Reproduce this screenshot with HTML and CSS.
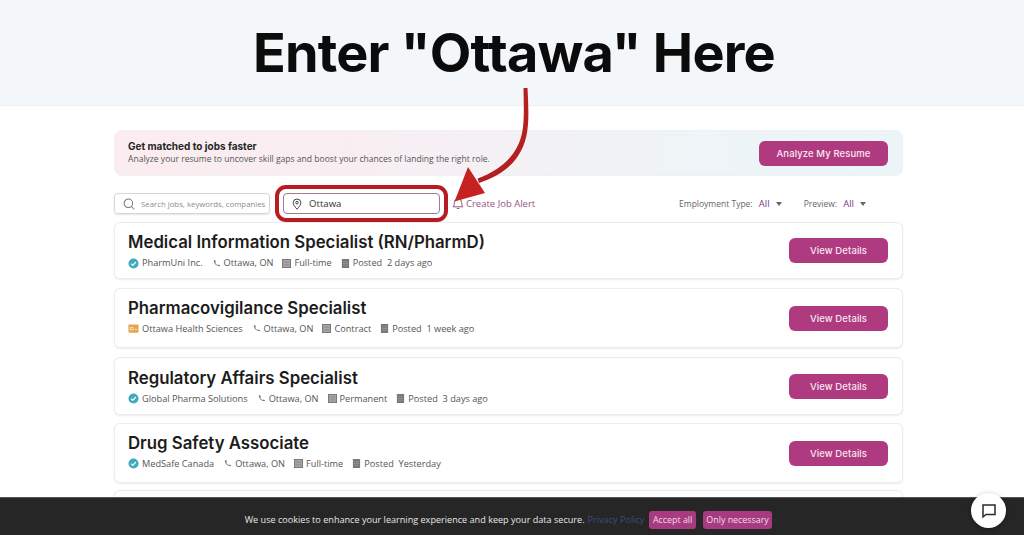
FILE: index.html
```html
<!DOCTYPE html>
<html lang="en">
<head>
    <meta charset="UTF-8">
    <meta name="viewport" content="width=device-width, initial-scale=1.0">
    <title>Enter Ottawa Here</title>
    <link rel="stylesheet" href="styles.css">
</head>
<body>
    <svg width="0" height="0" class="sprites">
        <symbol id="i-check" viewBox="0 0 12 12">
            <circle cx="6" cy="6" r="5.5" fill="#3fa9bd"/>
            <path d="M3.4 6.2l1.8 1.8 3.4-3.6" fill="none" stroke="#fff" stroke-width="1.3"/>
        </symbol>
        <symbol id="i-org" viewBox="0 0 12 10">
            <rect x="0.5" y="0.5" width="11" height="9" rx="1" fill="#e3a650"/>
            <path d="M2.5 4h3v2.5h-3zM7 6h3" fill="none" stroke="#fbe6c4" stroke-width="1"/>
        </symbol>
        <symbol id="i-phone" viewBox="0 0 12 12">
            <path d="M2.6 1.6c-.6 3.6 2.2 7.4 7.8 8.2l.2-1.6-2.3-.9-.9.9C5.8 7.4 4.7 6 4.2 4.7l1-.7-.8-2.4z" fill="#777"/>
        </symbol>
        <symbol id="i-grid" viewBox="0 0 10 10">
            <rect x="0.5" y="0.5" width="9" height="9" fill="#a5a5a5" stroke="#707070"/>
            <path d="M2 3.5h6M2 6.5h6" stroke="#808080" stroke-width="0.8"/>
        </symbol>
        <symbol id="i-doc" viewBox="0 0 8 10">
            <rect width="8" height="10" rx="0.5" fill="#777"/>
            <path d="M1 3h6M1 5h6M1 7h6" stroke="#aaa" stroke-width="0.6"/>
        </symbol>
    </svg>

    <header class="top-band">
        <h1>Enter "Ottawa" Here</h1>
    </header>

    <main class="container">
        <section class="banner">
            <div class="banner-text">
                <h2>Get matched to jobs faster</h2>
                <p>Analyze your resume to uncover skill gaps and boost your chances of landing the right role.</p>
            </div>
            <button class="btn btn-wide">Analyze My Resume</button>
        </section>

        <section class="toolbar">
            <div class="search-box">
                <svg class="search-icon" width="12" height="12" viewBox="0 0 13 13" fill="none" stroke="#777" stroke-width="1.1"><circle cx="5.8" cy="5.8" r="4.6"/><path d="M9.2 9.2l3 3"/></svg>
                <span>Search jobs, keywords, companies</span>
            </div>
            <div class="location-mark">
                <div class="location-box">
                    <svg width="10" height="12" viewBox="0 0 10 12" fill="none" stroke="#444" stroke-width="1"><path d="M5 11.2C2.6 8.6 1.2 6.7 1.2 4.8a3.8 3.8 0 0 1 7.6 0c0 1.900-1.400 3.800-3.800 6.400z"/><circle cx="5" cy="4.7" r="1.3"/></svg>
                    <span>Ottawa</span>
                </div>
            </div>
            <a class="alert-link">
                <svg width="12" height="13" viewBox="0 0 12 13" fill="none" stroke="#94557f" stroke-width="1"><path d="M1 9.8c1-1 1.300-1.800 1.300-4.200a3.700 3.700 0 0 1 7.400 0c0 2.400.3 3.200 1.300 4.200zM4.800 11.500h2.400"/></svg>
                Create Job Alert
            </a>
            <div class="filters">
                <span class="filter">Employment Type: <b>All</b><i class="caret"></i></span>
                <span class="filter">Preview: <b>All</b><i class="caret"></i></span>
            </div>
        </section>

        <section class="job-list">
            <article class="job job-a">
                <div>
                    <h3>Medical Information Specialist (RN/PharmD)</h3>
                    <div class="meta">
                        <span><svg class="ic"><use href="#i-check"/></svg>PharmUni Inc.</span>
                        <span><svg class="ic-sm"><use href="#i-phone"/></svg>Ottawa, ON</span>
                        <span><svg class="ic-sm"><use href="#i-grid"/></svg>Full-time</span>
                        <span><svg class="ic-sm"><use href="#i-doc"/></svg>Posted&nbsp; 2 days ago</span>
                    </div>
                </div>
                <button class="btn">View Details</button>
            </article>
            <article class="job job-b">
                <div>
                    <h3>Pharmacovigilance Specialist</h3>
                    <div class="meta">
                        <span><svg class="ic"><use href="#i-org"/></svg>Ottawa Health Sciences</span>
                        <span><svg class="ic-sm"><use href="#i-phone"/></svg>Ottawa, ON</span>
                        <span><svg class="ic-sm"><use href="#i-grid"/></svg>Contract</span>
                        <span><svg class="ic-sm"><use href="#i-doc"/></svg>Posted&nbsp; 1 week ago</span>
                    </div>
                </div>
                <button class="btn">View Details</button>
            </article>
            <article class="job job-c">
                <div>
                    <h3>Regulatory Affairs Specialist</h3>
                    <div class="meta">
                        <span><svg class="ic"><use href="#i-check"/></svg>Global Pharma Solutions</span>
                        <span><svg class="ic-sm"><use href="#i-phone"/></svg>Ottawa, ON</span>
                        <span><svg class="ic-sm"><use href="#i-grid"/></svg>Permanent</span>
                        <span><svg class="ic-sm"><use href="#i-doc"/></svg>Posted&nbsp; 3 days ago</span>
                    </div>
                </div>
                <button class="btn">View Details</button>
            </article>
            <article class="job job-b">
                <div>
                    <h3>Drug Safety Associate</h3>
                    <div class="meta">
                        <span><svg class="ic"><use href="#i-check"/></svg>MedSafe Canada</span>
                        <span><svg class="ic-sm"><use href="#i-phone"/></svg>Ottawa, ON</span>
                        <span><svg class="ic-sm"><use href="#i-grid"/></svg>Full-time</span>
                        <span><svg class="ic-sm"><use href="#i-doc"/></svg>Posted&nbsp; Yesterday</span>
                    </div>
                </div>
                <button class="btn">View Details</button>
            </article>
            <article class="job job-b job-end"></article>
        </section>
    </main>

    <!-- annotation arrow drawn over the page -->
    <svg class="arrow" width="100" height="130" viewBox="440 85 100 130">
        <path d="M523.5 88c.5 30 2 48-10 65-8 11-19 19-36 25.500l1.500 4.500c18-6 31-15 39-27 12-18 11-38 9.500-68z" fill="#b3201f"/>
        <path d="M454.5 201.500L468 167l17 26z" fill="#c62222"/>
    </svg>

    <footer class="cookie-bar">
        <span>We use cookies to enhance your learning experience and keep your data secure.</span>
        <a class="policy">Privacy Policy</a>
        <button class="cookie-btn">Accept all</button>
        <button class="cookie-btn">Only necessary</button>
    </footer>

    <div class="chat-bubble">
        <svg width="16" height="16" viewBox="0 0 16 16" fill="none" stroke="#2b2b2b" stroke-width="1.5"><path d="M2 2h12v9.500H5L2 14z"/></svg>
    </div>
</body>
</html>
```

FILE: styles.css
```css
body {
    font-family: "Open Sans", Arial, sans-serif;
    background-color: #fff;
    color: #333;
    margin: 0;
    height: 535px;
    overflow: hidden;
    position: relative;
}

.sprites {
    position: absolute;
}

.top-band {
    height: 106px;
    background: #f3f7fa;
    border-bottom: 1px solid #eef1f3;
    box-sizing: border-box;
    text-align: center;
}

h1 {
    margin: 0;
    padding: 22px 0 0 4px;
    font-family: Inter, Arial, sans-serif;
    font-size: 54px;
    line-height: 62px;
    font-weight: 700;
    letter-spacing: -0.8px;
    color: #0b0b0b;
}

.container {
    width: 789px;
    margin: 24px 0 0 114px;
}

.banner {
    height: 46px;
    box-sizing: border-box;
    padding: 0 14px 0 13px;
    display: flex;
    justify-content: space-between;
    align-items: center;
    border-radius: 8px;
    border: 1px solid #eef0f3;
    background: linear-gradient(90deg, #fbecef 0%, #f8eff3 35%, #eff4f7 70%, #ebf5f8 100%);
}

.banner-text {
    padding-bottom: 2px;
}

.banner h2 {
    margin: 0;
    font-family: Inter, Arial, sans-serif;
    font-size: 10px;
    line-height: 14px;
    font-weight: 700;
    color: #262626;
}

.banner p {
    margin: 0;
    font-size: 8.55px;
    line-height: 13px;
    color: #555;
}

.btn {
    width: 99px;
    height: 25px;
    border: none;
    border-radius: 6px;
    background-color: #b03a80;
    color: #f7e8f1;
    font-family: Inter, Arial, sans-serif;
    font-size: 9.5px;
    font-weight: 500;
    letter-spacing: 0.1px;
    padding: 0;
}

.btn-wide {
    width: 129px;
}

.toolbar {
    height: 37px;
    margin-top: 9px;
    display: flex;
    align-items: center;
}

.search-box {
    width: 156px;
    height: 21px;
    box-sizing: border-box;
    display: flex;
    align-items: center;
    gap: 6px;
    padding-left: 8px;
    border: 1px solid #d6d6d6;
    border-radius: 4px;
    font-size: 7.8px;
    color: #8d8d8d;
    white-space: nowrap;
    overflow: hidden;
    box-shadow: 0 1px 2px rgba(0, 0, 0, 0.1);
}

.search-icon {
    flex-shrink: 0;
}

.location-mark {
    margin-left: 5px;
    padding: 4px;
    border: 4px solid #b81c22;
    border-radius: 11px;
}

.location-box {
    width: 157px;
    height: 21px;
    box-sizing: border-box;
    display: flex;
    align-items: center;
    gap: 7px;
    padding-left: 8px;
    border: 1px solid #a07a97;
    border-radius: 4px;
    font-size: 9.6px;
    color: #333;
}

.alert-link {
    margin-left: 4px;
    display: flex;
    align-items: center;
    gap: 2px;
    font-size: 9.5px;
    color: #94557f;
}

.filters {
    margin-left: auto;
    margin-right: 37px;
    display: flex;
    gap: 22px;
}

.filter {
    color: #666;
    font-size: 8.5px;
}

.filter b {
    font-weight: 500;
    font-size: 9.5px;
    color: #7c3a8c;
    margin-left: 4px;
}

.caret {
    display: inline-block;
    margin-left: 6px;
    vertical-align: 1px;
    border-left: 3.5px solid transparent;
    border-right: 3.5px solid transparent;
    border-top: 4px solid #666;
}

.job-list {
    display: flex;
    flex-direction: column;
    gap: 9px;
}

.job {
    box-sizing: border-box;
    height: 57px;
    padding: 0 14px 0 13px;
    display: flex;
    justify-content: space-between;
    align-items: center;
    background: #fff;
    border: 1px solid #ececec;
    border-radius: 6px;
    box-shadow: 0 1px 2px rgba(0, 0, 0, 0.08);
}

.job-b {
    height: 60px;
}

.job-b > div {
    margin-bottom: 4px;
}

.job-c {
    height: 58px;
    margin-bottom: -1px;
}

.job-end {
    margin-top: -2px;
}

h3 {
    margin: 0 0 3px;
    font-family: Inter, Arial, sans-serif;
    font-size: 16.8px;
    line-height: 22px;
    font-weight: 600;
    color: #1c1c1c;
}

.meta {
    display: flex;
    gap: 9px;
    font-size: 9.2px;
    line-height: 14px;
    color: #555;
    white-space: nowrap;
}

.meta span {
    display: flex;
    align-items: center;
    gap: 3px;
}

.ic {
    width: 11px;
    height: 11px;
}

.ic-sm {
    width: 9px;
    height: 9px;
}

.arrow {
    position: absolute;
    left: 440px;
    top: 85px;
}

.cookie-bar {
    position: absolute;
    left: 0;
    right: 0;
    bottom: 0;
    height: 38px;
    padding: 6px 7px 0 0;
    box-sizing: border-box;
    display: flex;
    justify-content: center;
    align-items: center;
    gap: 3px;
    background: #262626;
    border-top: 1px solid #555;
    color: #e6e6e6;
    font-size: 9.1px;
}

.policy {
    color: #3f4a82;
    margin-right: 2px;
}

.cookie-btn {
    height: 18px;
    padding: 0 3.5px;
    border: none;
    border-radius: 3px;
    background-color: #a83a7f;
    color: #efdfe9;
    font-family: "Open Sans", Arial, sans-serif;
    font-size: 8.9px;
}

.cookie-btn + .cookie-btn {
    margin-left: 4px;
}

.chat-bubble {
    position: absolute;
    left: 971px;
    top: 493px;
    width: 35px;
    height: 35px;
    display: flex;
    align-items: center;
    justify-content: center;
    background: #fff;
    border-radius: 50%;
    box-shadow: 0 1px 4px rgba(0, 0, 0, 0.3);
}
```
